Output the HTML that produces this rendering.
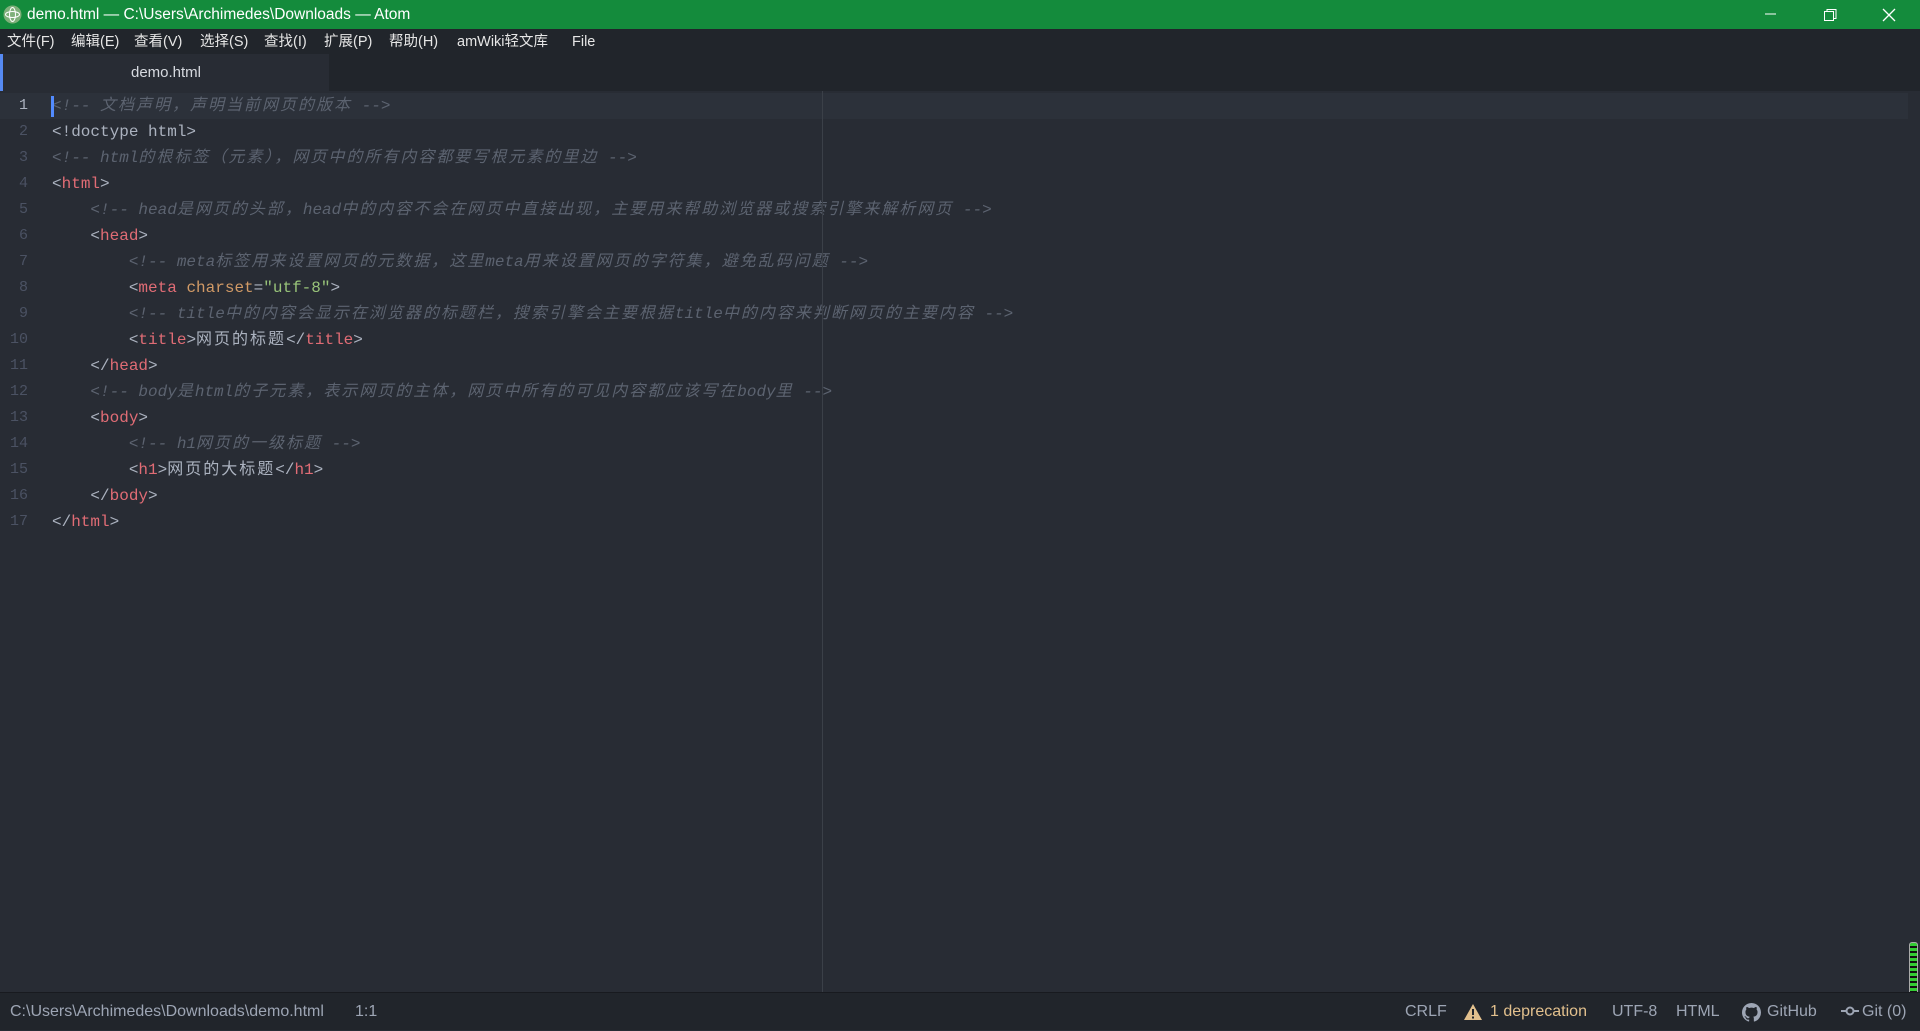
<!DOCTYPE html>
<html><head><meta charset="utf-8"><style>
*{margin:0;padding:0;box-sizing:border-box}
body{width:1920px;height:1030px;background:#282c34;font-family:"Liberation Sans","Noto Sans CJK SC",sans-serif;overflow:hidden;position:relative}
#title{position:absolute;left:0;top:0;width:1920px;height:29px;background:#148b3c;color:#fff;font-size:15.5px;line-height:29px}
#title .t{position:absolute;left:27px}
#menu{position:absolute;top:29px;left:0;width:1920px;height:25px;background:#21252b;color:#e6e6e6;font-size:14.5px;line-height:27px}
#menu span{position:absolute;top:0}
#tabs{position:absolute;top:54px;left:0;width:1920px;height:37px;background:#21252b}
#tab{position:absolute;left:0;top:0;width:329px;height:37px;background:#282c34;border-left:3px solid #568af2;color:#d7dae0;font-size:15px;line-height:37px;text-align:center}
#ed{position:absolute;top:93px;left:0;width:1920px;height:899px;background:#282c34;font-family:"Liberation Mono","Noto Sans CJK SC",monospace;font-size:16px}
.l{position:absolute;left:0;height:26px;width:1908px;line-height:26px;white-space:pre;color:#abb2bf}
.n{position:absolute;left:0;width:28px;text-align:right;color:#4b5263;font-size:15px}
.code{position:absolute;left:52px}
.c{color:#5c6370;font-style:italic}
i{font-style:inherit;letter-spacing:2px}
.g{color:#e06c75}.a{color:#d19a66}.s{color:#98c379}
#guide{position:absolute;left:822px;top:91px;width:1px;height:901px;background:#3b4048}
#status{position:absolute;top:992px;left:0;width:1920px;height:38px;background:#21252b;border-top:1px solid #181a1f;color:#9da5b4;font-size:16px;line-height:38px}
#status span{position:absolute;top:0}
</style></head><body>
<div id="title"><svg style="position:absolute;left:3px;top:5px" width="19" height="19"><circle cx="9.5" cy="9.5" r="9" fill="#7fb07a"/><ellipse cx="9.5" cy="9.5" rx="7" ry="3" fill="none" stroke="#fff" stroke-width="1"/><ellipse cx="9.5" cy="9.5" rx="3" ry="7" fill="none" stroke="#fff" stroke-width="1"/></svg><span class="t">demo.html — C:\Users\Archimedes\Downloads — Atom</span>
<svg style="position:absolute;left:1765px;top:7px" width="140" height="16"><line x1="0" y1="7" x2="11" y2="7" stroke="#fff"/><rect x="59.5" y="4.5" width="9" height="9" fill="none" stroke="#fff"/><path d="M62 4.5V2.5H71V11.5H68.5" fill="none" stroke="#fff"/><path d="M118 2L130 14M130 2L118 14" stroke="#fff" stroke-width="1.3"/></svg></div>
<div id="menu"><span style="left:7px">文件(F)</span><span style="left:71px">编辑(E)</span><span style="left:134px">查看(V)</span><span style="left:200px">选择(S)</span><span style="left:264px">查找(I)</span><span style="left:324px">扩展(P)</span><span style="left:389px">帮助(H)</span><span style="left:457px">amWiki轻文库</span><span style="left:572px">File</span></div>
<div id="tabs"><div id="tab">demo.html</div></div>
<div id="ed">
<div class="l" style="top:0;background:#2c313a"><span class="n" style="color:#abb2bf">1</span><span class="code c">&lt;!-- <i>文档声明，声明当前网页的版本</i> --&gt;</span><span style="position:absolute;left:51px;top:3px;width:3px;height:21px;background:#528bff"></span></div>
<div class="l" style="top:26px"><span class="n">2</span><span class="code">&lt;!doctype html&gt;</span></div>
<div class="l" style="top:52px"><span class="n">3</span><span class="code c">&lt;!-- html<i>的根标签（元素），网页中的所有内容都要写根元素的里边</i> --&gt;</span></div>
<div class="l" style="top:78px"><span class="n">4</span><span class="code">&lt;<span class="g">html</span>&gt;</span></div>
<div class="l" style="top:104px"><span class="n">5</span><span class="code c">    &lt;!-- head<i>是网页的头部，</i>head<i>中的内容不会在网页中直接出现，主要用来帮助浏览器或搜索引擎来解析网页</i> --&gt;</span></div>
<div class="l" style="top:130px"><span class="n">6</span><span class="code">    &lt;<span class="g">head</span>&gt;</span></div>
<div class="l" style="top:156px"><span class="n">7</span><span class="code c">        &lt;!-- meta<i>标签用来设置网页的元数据，这里</i>meta<i>用来设置网页的字符集，避免乱码问题</i> --&gt;</span></div>
<div class="l" style="top:182px"><span class="n">8</span><span class="code">        &lt;<span class="g">meta</span> <span class="a">charset</span>=<span class="s">"utf-8"</span>&gt;</span></div>
<div class="l" style="top:208px"><span class="n">9</span><span class="code c">        &lt;!-- title<i>中的内容会显示在浏览器的标题栏，搜索引擎会主要根据</i>title<i>中的内容来判断网页的主要内容</i> --&gt;</span></div>
<div class="l" style="top:234px"><span class="n">10</span><span class="code">        &lt;<span class="g">title</span>&gt;<i>网页的标题</i>&lt;/<span class="g">title</span>&gt;</span></div>
<div class="l" style="top:260px"><span class="n">11</span><span class="code">    &lt;/<span class="g">head</span>&gt;</span></div>
<div class="l" style="top:286px"><span class="n">12</span><span class="code c">    &lt;!-- body<i>是</i>html<i>的子元素，表示网页的主体，网页中所有的可见内容都应该写在</i>body<i>里</i> --&gt;</span></div>
<div class="l" style="top:312px"><span class="n">13</span><span class="code">    &lt;<span class="g">body</span>&gt;</span></div>
<div class="l" style="top:338px"><span class="n">14</span><span class="code c">        &lt;!-- h1<i>网页的一级标题</i> --&gt;</span></div>
<div class="l" style="top:364px"><span class="n">15</span><span class="code">        &lt;<span class="g">h1</span>&gt;<i>网页的大标题</i>&lt;/<span class="g">h1</span>&gt;</span></div>
<div class="l" style="top:390px"><span class="n">16</span><span class="code">    &lt;/<span class="g">body</span>&gt;</span></div>
<div class="l" style="top:416px"><span class="n">17</span><span class="code">&lt;/<span class="g">html</span>&gt;</span></div>
</div>
<div id="guide"></div>
<div style="position:absolute;left:1909px;top:942px;width:9px;height:58px;border:1px solid #aaa;border-radius:3px;background:repeating-linear-gradient(#3c3 0 3px,#111 3px 5px)"></div>
<div id="status"><span style="left:10px">C:\Users\Archimedes\Downloads\demo.html</span><span style="left:355px">1:1</span>
<span style="left:1405px">CRLF</span>
<svg style="position:absolute;left:1463px;top:10px" width="20" height="18"><path d="M10 1L19 17H1Z" fill="#e2c08d"/><rect x="9" y="6" width="2" height="6" fill="#21252b"/><rect x="9" y="13.5" width="2" height="2" fill="#21252b"/></svg>
<span style="left:1490px;color:#e2c08d">1 deprecation</span>
<span style="left:1612px">UTF-8</span><span style="left:1676px">HTML</span>
<svg style="position:absolute;left:1742px;top:10px" width="19" height="19" viewBox="0 0 16 16"><path fill="#9da5b4" d="M8 0C3.58 0 0 3.58 0 8c0 3.54 2.29 6.53 5.47 7.59.4.07.55-.17.55-.38v-1.33c-2.23.48-2.7-1.07-2.7-1.07-.36-.92-.89-1.17-.89-1.17-.73-.5.05-.49.05-.49.8.06 1.23.83 1.23.83.71 1.22 1.87.87 2.33.66.07-.52.28-.87.5-1.07-1.78-.2-3.65-.89-3.65-3.95 0-.87.31-1.59.82-2.15-.08-.2-.36-1.02.08-2.12 0 0 .67-.21 2.2.82a7.6 7.6 0 014 0c1.53-1.04 2.2-.82 2.2-.82.44 1.1.16 1.92.08 2.12.51.56.82 1.27.82 2.15 0 3.07-1.87 3.75-3.65 3.95.29.25.54.73.54 1.48v2.2c0 .21.15.46.55.38A8 8 0 0016 8c0-4.42-3.58-8-8-8z"/></svg>
<span style="left:1767px">GitHub</span>
<svg style="position:absolute;left:1841px;top:12px" width="18" height="12"><line x1="0" y1="6" x2="18" y2="6" stroke="#9da5b4" stroke-width="2"/><circle cx="9" cy="6" r="3.5" fill="#21252b" stroke="#9da5b4" stroke-width="2"/></svg>
<span style="left:1862px">Git (0)</span></div>
</body></html>
